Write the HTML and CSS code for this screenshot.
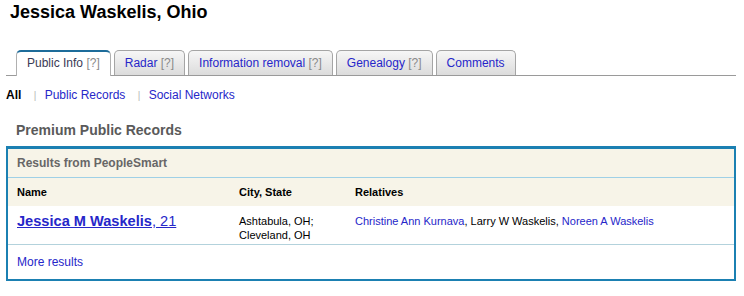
FILE: index.html
```html
<!DOCTYPE html>
<html lang="en">
<head>
  <meta charset="UTF-8" />
  <title>Jessica Waskelis, Ohio</title>
  <link rel="stylesheet" href="styles.css">
</head>
<body>
  <div class="page">
    <h1>Jessica Waskelis, Ohio</h1>

    <ul class="tabs">
      <li class="tab active"><a href="#">Public Info</a> <span class="help">[?]</span></li>
      <li class="tab"><a href="#">Radar</a> <span class="help">[?]</span></li>
      <li class="tab"><a href="#">Information removal</a> <span class="help">[?]</span></li>
      <li class="tab"><a href="#">Genealogy</a> <span class="help">[?]</span></li>
      <li class="tab"><a href="#">Comments</a></li>
    </ul>

    <div class="subnav">
      <b>All</b>
      <span class="sep">|</span>
      <a href="#">Public Records</a>
      <span class="sep">|</span>
      <a href="#">Social Networks</a>
    </div>

    <h2>Premium Public Records</h2>

    <div class="results">
      <div class="results-title">Results from PeopleSmart</div>
      <table>
        <thead>
          <tr>
            <th class="col-name">Name</th>
            <th class="col-city">City, State</th>
            <th>Relatives</th>
          </tr>
        </thead>
        <tbody>
          <tr>
            <td class="person"><a href="#"><b>Jessica M Waskelis</b>, 21</a></td>
            <td class="small">Ashtabula, OH;<br>Cleveland, OH</td>
            <td class="small"><a href="#">Christine Ann Kurnava</a>, Larry W Waskelis, <a href="#">Noreen A Waskelis</a></td>
          </tr>
        </tbody>
      </table>
      <div class="more"><a href="#">More results</a></div>
    </div>
  </div>
</body>
</html>
```

FILE: styles.css
```css
body {
  margin: 0;
  font-family: "Liberation Sans", Arial, sans-serif;
  color: #000;
  background: #fff;
}
a {
  color: #2626c9;
  text-decoration: none;
}
.page {
  padding: 0 8px 0 6px;
}
h1 {
  margin: 0 0 0 4px;
  font-size: 18px;
  line-height: 24px;
}
.tabs {
  list-style: none;
  margin: 26px 0 0;
  padding: 0 0 0 10px;
  display: flex;
  gap: 3px;
  border-bottom: 1px solid #9a9a9a;
}
.tab {
  height: 24px;
  line-height: 25px;
  padding: 0 10px;
  font-size: 12px;
  border: 1px solid #a5a5a5;
  border-bottom: none;
  border-radius: 5px 5px 0 0;
  background: linear-gradient(#f6f6f6, #dcdcdc);
}
.tab .help {
  color: #8a8a8a;
}
.tab.active {
  background: #fff;
  border-color: #b0b0b0;
  border-top: 2px solid #1d6c9a;
  height: 24px;
  line-height: 23px;
  margin-bottom: -1px;
}
.tab.active a {
  color: #3a3a55;
}
.subnav {
  font-size: 12px;
  line-height: 16px;
  margin-top: 11px;
}
.subnav .sep {
  color: #b8b8b8;
  font-size: 10px;
  margin: 0 5px 0 9px;
}
h2 {
  margin: 17px 0 0 10px;
  font-size: 14px;
  line-height: 18px;
  color: #5a5a5a;
}
.results {
  margin-top: 7px;
  border: 2px solid #1b80b2;
  border-top-width: 3px;
}
.results-title {
  background: #f7f4e8;
  color: #676767;
  font-weight: bold;
  font-size: 12px;
  line-height: 28px;
  padding: 0 9px;
  border-bottom: 1px solid #9fd0e6;
}
table {
  width: 100%;
  border-collapse: collapse;
}
th {
  background: #f7f4e8;
  text-align: left;
  font-size: 11px;
  height: 28px;
  padding: 0 9px;
}
.col-name {
  width: 204px;
}
.col-city {
  width: 98px;
}
td {
  font-size: 11px;
  line-height: 14px;
  vertical-align: top;
  padding: 8px 9px 2px;
  border-bottom: 1px solid #b3d2dc;
}
td.person {
  font-size: 14.6px;
  line-height: 16px;
  padding-top: 7px;
}
td.person a {
  text-decoration: underline;
}
.more {
  font-size: 12px;
  padding: 0 9px;
  line-height: 34px;
}
```
